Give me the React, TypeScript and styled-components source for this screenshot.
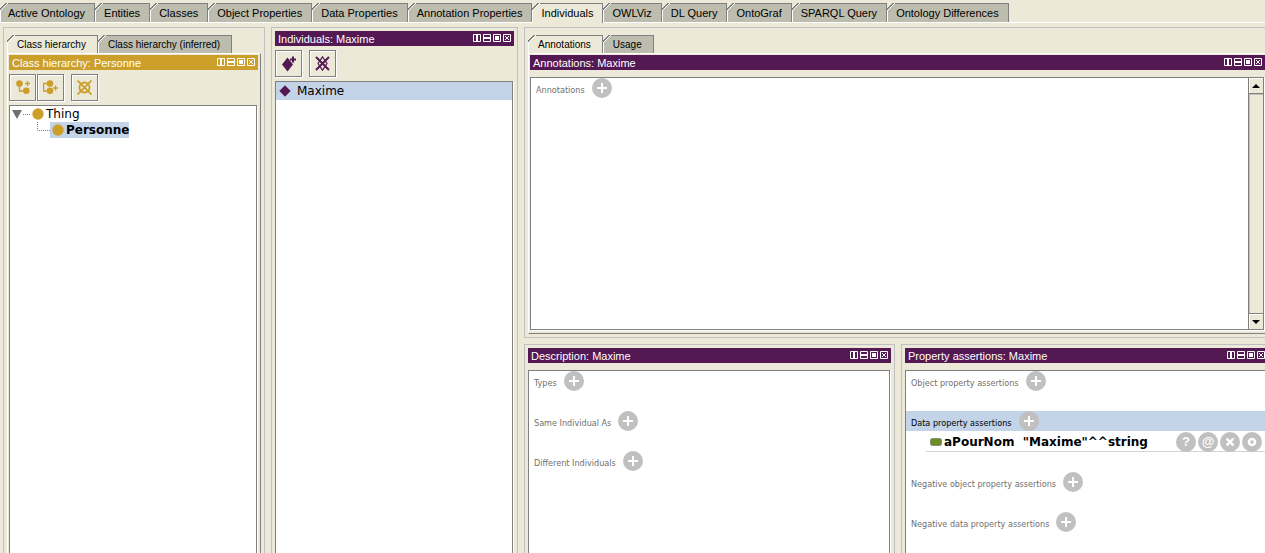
import React from "react";
import styled, { createGlobalStyle, css } from "styled-components";

const face = "#ece9d8";
const gold = "#cc9f2a";
const purple = "#541852";
const line = "#808080";
const frame = "#c0c0c0";
const selection = "#c3d3e8";

const GlobalStyle = createGlobalStyle`
  *, *::before, *::after { box-sizing: border-box; }
  html, body { margin: 0; background: ${face}; }
  body { font-family: "Liberation Sans", Arial, sans-serif; font-size: 11px; color: #000; overflow: hidden; }
  button { font: inherit; color: inherit; border: 0; padding: 0; margin: 0; background: none; }
  ul, h2, h3 { margin: 0; padding: 0; font: inherit; list-style: none; }
  svg { display: block; }
`;

const Page = styled.div`
  height: 100vh;
  display: flex;
  flex-direction: column;
`;

const Tab = styled.button<{ $active?: boolean; $small?: boolean }>`
  flex: none;
  height: ${(p) => (p.$small ? 18 : 19)}px;
  padding: ${(p) => (p.$small ? "1px 12px 0 10px" : "1px 10px 0 9px")};
  line-height: 18px;
  white-space: nowrap;
  font-size: ${(p) => (p.$small ? 10 : 11)}px;
  background:
    linear-gradient(135deg, ${face} 0 4px, ${line} 4px 5px, #fff 5px 6px, transparent 6px) 0 0 / 8px 8px no-repeat,
    linear-gradient(${line}, ${line}) 0 0 / 100% 1px no-repeat,
    linear-gradient(${line}, ${line}) 100% 0 / 1px 100% no-repeat,
    linear-gradient(#fff, #fff) 0 6px / 1px 100% no-repeat,
    ${(p) => (p.$active ? face : "#bdbdaf")};
  ${(p) =>
    p.$active &&
    css`
      height: ${p.$small ? 19 : 20}px;
      padding-bottom: 1px;
      margin-bottom: -1px;
    `}
`;

const MainTabs = styled.nav`
  display: flex;
  flex: none;
  padding-top: 3px;
  border-bottom: 1px solid #fff;
  ${Tab}:first-child { padding-left: 8px; }
`;

const Workspace = styled.main`
  flex: 1;
  min-height: 0;
  display: grid;
  grid-template-columns: 262px 247px minmax(0, 1fr);
  grid-template-rows: minmax(0, 1fr);
  gap: 6px;
  padding: 4px 0 0 3px;
`;

const RightColumn = styled.div`
  display: grid;
  grid-template-rows: minmax(0, 311fr) minmax(0, 209fr);
  gap: 6px;
`;

const BottomRow = styled.div`
  display: grid;
  grid-template-columns: minmax(0, 371fr) minmax(0, 364fr);
  gap: 6px;
`;

const Panel = styled.section<{ $tabbed?: boolean; $openRight?: boolean; $openBottom?: boolean }>`
  display: flex;
  flex-direction: column;
  min-width: 0;
  min-height: 0;
  border: 1px solid ${frame};
  padding: ${(p) => (p.$tabbed ? 7 : 3)}px 3px 3px;
  ${(p) => p.$openRight && "border-right: 0; padding-right: 0;"}
  ${(p) => p.$openBottom && "border-bottom: 0; padding-bottom: 0;"}
`;

const PanelTabs = styled.div`
  display: flex;
  flex: none;
`;

const TabBody = styled.div<{ $openRight?: boolean; $openBottom?: boolean }>`
  flex: 1;
  min-height: 0;
  display: flex;
  flex-direction: column;
  border: 1px solid ${line};
  border-top-color: #fff;
  border-left-color: #fff;
  padding: 1px 2px 3px 1px;
  ${(p) => p.$openRight && "border-right: 0; padding-right: 0;"}
  ${(p) => p.$openBottom && "border-bottom: 0; padding-bottom: 0;"}
`;

const TitleBar = styled.header<{ $color: string; $flush?: boolean }>`
  flex: none;
  height: 15px;
  display: flex;
  justify-content: space-between;
  align-items: flex-start;
  padding: 0 ${(p) => (p.$flush ? 0 : 3)}px 0 3px;
  color: #fff;
  background: ${(p) => p.$color};
  h2 { line-height: 16px; white-space: nowrap; }
`;

const WindowControls = styled.div`
  display: flex;
  gap: 2px;
  padding-top: 3px;
`;

const Toolbar = styled.div`
  flex: none;
  display: flex;
  gap: 1px;
  margin-top: 4px;
`;

const ToolButton = styled.button<{ $apart?: boolean }>`
  width: 27px;
  height: 27px;
  display: grid;
  place-items: center;
  border: 1px solid ${line};
  box-shadow: inset 1px 1px #fff, 1px 1px #fff;
  margin-left: ${(p) => (p.$apart ? 6 : 0)}px;
`;

const Content = styled.div<{ $gap?: number; $openRight?: boolean; $openBottom?: boolean }>`
  flex: 1;
  min-height: 0;
  display: flex;
  margin: ${(p) => p.$gap ?? 7}px 1px 0 0;
  background: #fff;
  border: 1px solid ${line};
  box-shadow: 1px 1px #fff;
  ${(p) => p.$openRight && "border-right: 0; margin-right: 0;"}
  ${(p) => p.$openBottom && "border-bottom: 0;"}
`;

const Tree = styled.ul`
  font: 12px/16px "DejaVu Sans", Verdana, sans-serif;
`;

const TreeRow = styled.li<{ $level: number }>`
  display: flex;
  align-items: center;
  height: 16px;
  padding-left: ${(p) => (p.$level ? 26 : 2)}px;
`;

const TreeLabel = styled.span<{ $selected?: boolean }>`
  display: flex;
  align-items: center;
  gap: 2px;
  padding-left: 2px;
  height: 16px;
  ${(p) => p.$selected && `background: ${selection}; font-weight: bold;`}
`;

const InstanceList = styled.ul`
  flex: 1;
  font: 12px/18px "DejaVu Sans", Verdana, sans-serif;
`;

const InstanceRow = styled.li`
  display: flex;
  align-items: center;
  gap: 6px;
  height: 18px;
  padding-left: 3px;
  background: ${selection};
`;

const Sections = styled.div`
  flex: 1;
  min-width: 0;
  display: flex;
  flex-direction: column;
  gap: 20px;
`;

const SectionHead = styled.div<{ $selected?: boolean }>`
  display: flex;
  align-items: center;
  gap: 7px;
  height: 20px;
  padding-left: 5px;
  color: ${(p) => (p.$selected ? "#000" : "#707070")};
  background: ${(p) => (p.$selected ? selection : "none")};
  h3 { font: 9px/12px "DejaVu Sans Condensed", Tahoma, sans-serif; padding-top: 3px; white-space: nowrap; }
`;

const Assertion = styled.div`
  display: flex;
  align-items: center;
  justify-content: space-between;
  height: 21px;
  margin-left: 20px;
  padding: 0 3px 0 4px;
  border-bottom: 1px solid #d3d3d3;
  font: bold 12px/20px "DejaVu Sans", Verdana, sans-serif;
`;

const Statement = styled.span`
  display: flex;
  align-items: center;
  gap: 2px;
  padding-top: 1px;
  white-space: pre;
`;

const Actions = styled.span`
  display: flex;
  gap: 2px;
  height: 20px;
  margin-top: 2px;
`;

const RoundButton = styled.button`
  flex: none;
  width: 20px;
  height: 20px;
  border-radius: 50%;
  display: grid;
  place-items: center;
  background: ${frame};
  color: #fff;
  font: bold 13px/20px "Liberation Sans", Arial, sans-serif;
`;

const ScrollBar = styled.div`
  flex: none;
  width: 15px;
  display: flex;
  flex-direction: column;
  border-left: 1px solid ${line};
  background: ${face};
`;

const ScrollButton = styled.button`
  height: 15px;
  display: grid;
  place-items: center;
  box-shadow: inset 1px 1px #fff;
`;

const ScrollThumb = styled.div`
  flex: 1;
  border: solid ${line};
  border-width: 1px 0;
  box-shadow: inset 1px 1px ${frame};
`;

const Controls = () => (
  <WindowControls>
    {[
      ["Split vertically", "M4 1V7"],
      ["Split horizontally", "M1 4H7"],
      ["Float", "M3 3H5V5H3Z"],
      ["Close", "M2 2L6 6M6 2L2 6"],
    ].map(([name, d], i) => (
      <button key={name} aria-label={name}>
        <svg width="8" height="8" viewBox="0 0 8 8" fill="none" stroke="#fff" strokeWidth={i === 3 ? 1 : 2}>
          <path d="M.5 .5H7.5V7.5H.5Z" strokeWidth="1" />
          <path d={d} />
        </svg>
      </button>
    ))}
  </WindowControls>
);

const Title = ({ text, color = purple, flush }: { text: string; color?: string; flush?: boolean }) => (
  <TitleBar $color={color} $flush={flush}>
    <h2>{text}</h2>
    <Controls />
  </TitleBar>
);

const AddButton = ({ label }: { label: string }) => (
  <RoundButton aria-label={`Add: ${label}`}>
    <svg width="10" height="10" viewBox="0 0 10 10" stroke="#fff" strokeWidth="2">
      <path d="M5 0V10M0 5H10" />
    </svg>
  </RoundButton>
);

const Section = ({ label, selected, children }: { label: string; selected?: boolean; children?: React.ReactNode }) => (
  <div>
    <SectionHead $selected={selected}>
      <h3>{label}</h3>
      <AddButton label={label} />
    </SectionHead>
    {children}
  </div>
);

const ClassDot = () => (
  <svg width="12" height="12" viewBox="0 0 12 12">
    <circle cx="6" cy="6" r="5.7" fill={gold} />
  </svg>
);

const mainTabs = [
  "Active Ontology", "Entities", "Classes", "Object Properties", "Data Properties", "Annotation Properties",
  "Individuals", "OWLViz", "DL Query", "OntoGraf", "SPARQL Query", "Ontology Differences",
];

export default function App() {
  return (
    <Page>
      <GlobalStyle />
      <MainTabs>
        {mainTabs.map((name) => (
          <Tab key={name} $active={name === "Individuals"}>{name}</Tab>
        ))}
      </MainTabs>
      <Workspace>
        <Panel $tabbed $openBottom>
          <PanelTabs>
            <Tab $small $active>Class hierarchy</Tab>
            <Tab $small>Class hierarchy (inferred)</Tab>
          </PanelTabs>
          <TabBody $openBottom>
            <Title text="Class hierarchy: Personne" color={gold} />
            <Toolbar>
              <ToolButton aria-label="Add subclass">
                <svg width="15" height="15" viewBox="0 0 15 15" fill="none" stroke={gold}>
                  <path d="M4.5 5V11H9M10 3.5H15M12.5 1V6" strokeWidth="1.3" />
                  <circle cx="4.5" cy="3.5" r="3.3" fill={gold} stroke="none" />
                  <circle cx="11.3" cy="10.7" r="3.3" fill={gold} stroke="none" />
                </svg>
              </ToolButton>
              <ToolButton aria-label="Add sibling class">
                <svg width="15" height="15" viewBox="0 0 15 15" fill="none" stroke={gold}>
                  <path d="M5 3.5H.6V11H5M10 8H15M12.5 5.5V10.5" strokeWidth="1.3" />
                  <circle cx="7" cy="3.5" r="3.3" fill={gold} stroke="none" />
                  <circle cx="7" cy="10.7" r="3.3" fill={gold} stroke="none" />
                </svg>
              </ToolButton>
              <ToolButton $apart aria-label="Delete class">
                <svg width="15" height="15" viewBox="0 0 15 15" fill="none" stroke={gold} strokeWidth="1.8">
                  <circle cx="7.5" cy="7.5" r="5" />
                  <path d="M.5 .5L14.5 14.5M14.5 .5L.5 14.5" />
                </svg>
              </ToolButton>
            </Toolbar>
            <Content $gap={4} $openBottom>
              <Tree>
                <TreeRow $level={0}>
                  <svg width="18" height="16" viewBox="0 0 18 16">
                    <path d="M0 4H10L5 13Z" fill="#707070" />
                    <path d="M11 8.5H18" stroke={line} strokeDasharray="1 1" />
                  </svg>
                  <TreeLabel><ClassDot />Thing</TreeLabel>
                </TreeRow>
                <TreeRow $level={1}>
                  <svg width="14" height="16" viewBox="0 0 14 16" fill="none" stroke={line} strokeDasharray="1 1">
                    <path d="M1.5 0V8.5H14" />
                  </svg>
                  <TreeLabel $selected><ClassDot />Personne</TreeLabel>
                </TreeRow>
              </Tree>
            </Content>
          </TabBody>
        </Panel>

        <Panel $openBottom>
          <Title text="Individuals: Maxime" />
          <Toolbar>
            <ToolButton aria-label="Add individual">
              <svg width="16" height="16" viewBox="0 0 16 16">
                <path d="M6.5 1.5L12 8.5L6.5 15.5L1 8.5Z" fill={purple} />
                <path d="M12 .5V6.5M9 3.5H15" stroke={purple} strokeWidth="2" />
              </svg>
            </ToolButton>
            <ToolButton $apart aria-label="Delete individual">
              <svg width="15" height="15" viewBox="0 0 15 15" fill="none" stroke={purple}>
                <path d="M7.5 .8L12 7.5L7.5 14.2L3 7.5Z" strokeWidth="1.2" />
                <path d="M1 1L14 14M14 1L1 14" strokeWidth="2" />
              </svg>
            </ToolButton>
          </Toolbar>
          <Content $gap={4} $openBottom>
            <InstanceList>
              <InstanceRow>
                <svg width="12" height="12" viewBox="0 0 12 12">
                  <path d="M6 .8L11.2 6L6 11.2L.8 6Z" fill={purple} stroke={purple} strokeLinejoin="round" />
                </svg>
                Maxime
              </InstanceRow>
            </InstanceList>
          </Content>
        </Panel>

        <RightColumn>
          <Panel $tabbed $openRight>
            <PanelTabs>
              <Tab $small $active>Annotations</Tab>
              <Tab $small>Usage</Tab>
            </PanelTabs>
            <TabBody $openRight>
              <Title text="Annotations: Maxime" />
              <Content>
                <Sections>
                  <Section label="Annotations" />
                </Sections>
                <ScrollBar>
                  <ScrollButton aria-label="Scroll up">
                    <svg width="8" height="4" viewBox="0 0 8 4"><path d="M0 4L4 0L8 4Z" /></svg>
                  </ScrollButton>
                  <ScrollThumb />
                  <ScrollButton aria-label="Scroll down">
                    <svg width="8" height="4" viewBox="0 0 8 4"><path d="M0 0L4 4L8 0Z" /></svg>
                  </ScrollButton>
                </ScrollBar>
              </Content>
            </TabBody>
          </Panel>

          <BottomRow>
            <Panel $openBottom>
              <Title text="Description: Maxime" />
              <Content $openBottom>
                <Sections>
                  <Section label="Types" />
                  <Section label="Same Individual As" />
                  <Section label="Different Individuals" />
                </Sections>
              </Content>
            </Panel>
            <Panel $openRight $openBottom>
              <Title text="Property assertions: Maxime" flush />
              <Content $openRight $openBottom>
                <Sections>
                  <Section label="Object property assertions" />
                  <Section label="Data property assertions" selected>
                    <Assertion>
                      <Statement>
                        <svg width="12" height="8" viewBox="0 0 12 8">
                          <rect x=".5" y=".5" width="11" height="7" rx="2" fill="#6b8e23" stroke="#808878" />
                        </svg>
                        {'aPourNom  "Maxime"^^string'}
                      </Statement>
                      <Actions>
                        <RoundButton aria-label="Explain">?</RoundButton>
                        <RoundButton aria-label="Annotate">@</RoundButton>
                        <RoundButton aria-label="Delete">
                          <svg width="8" height="8" viewBox="0 0 8 8" stroke="#fff" strokeWidth="2.4">
                            <path d="M.5 .5L7.5 7.5M7.5 .5L.5 7.5" />
                          </svg>
                        </RoundButton>
                        <RoundButton aria-label="Edit">
                          <svg width="10" height="10" viewBox="0 0 10 10" fill="none" stroke="#fff" strokeWidth="2.6">
                            <circle cx="5" cy="5" r="3" />
                          </svg>
                        </RoundButton>
                      </Actions>
                    </Assertion>
                  </Section>
                  <Section label="Negative object property assertions" />
                  <Section label="Negative data property assertions" />
                </Sections>
              </Content>
            </Panel>
          </BottomRow>
        </RightColumn>
      </Workspace>
    </Page>
  );
}
